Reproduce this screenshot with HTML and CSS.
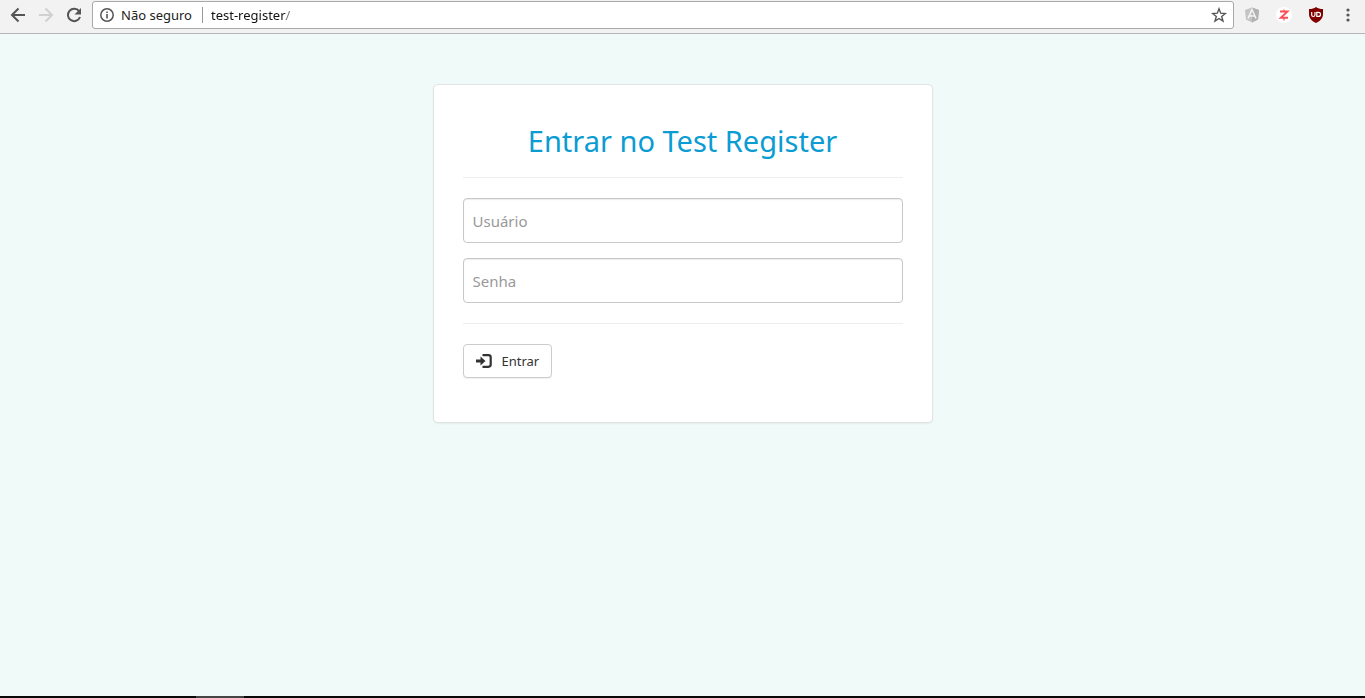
FILE: index.html
```html
<!DOCTYPE html>
<html lang="pt-BR">
<head>
<meta charset="utf-8">
<meta name="viewport" content="width=device-width, initial-scale=1">
<title>Test Register</title>
<link rel="stylesheet" href="styles.css">
</head>
<body>
<header class="toolbar">
  <nav class="nav-buttons">
    <button class="tool" type="button" aria-label="Voltar"><svg width="16" height="16" viewBox="0 0 16 16" fill="none" stroke="#555" stroke-width="2"><path d="M15 8H3M8.500 1.500L2 8l6.500 6.500"/></svg></button>
    <button class="tool" type="button" aria-label="Avançar" disabled><svg width="16" height="16" viewBox="0 0 16 16" fill="none" stroke="#d0d0d0" stroke-width="2"><path d="M1 8h12M7.500 1.500L14 8l-6.500 6.500"/></svg></button>
    <button class="tool" type="button" aria-label="Recarregar"><svg width="16" height="16" viewBox="0 0 16 16"><path d="M13.200 4.300A6.200 6.200 0 1 0 14 10" fill="none" stroke="#555" stroke-width="2"/><path d="M15 1v6.500H8.500z" fill="#555"/></svg></button>
  </nav>
  <div class="address">
    <svg class="info" width="14" height="14" viewBox="0 0 14 14"><circle cx="7" cy="7" r="6.200" fill="none" stroke="#555" stroke-width="1.500"/><path d="M6.200 6h1.600v4.500H6.200zM6.200 3.400h1.600V5H6.200z" fill="#555"/></svg>
    <span class="security">Não seguro</span>
    <input class="url" type="text" value="test-register/" aria-label="Endereço">
    <button class="tool star" type="button" aria-label="Favoritos"><svg width="16" height="16" viewBox="0 0 16 16" fill="none" stroke="#555" stroke-width="1.400"><path d="M8 1.800l1.700 4.400 4.700.3-3.700 3 1.300 4.600L8 11.500l-4 2.600 1.300-4.600-3.700-3 4.700-.3z"/></svg></button>
  </div>
  <div class="extensions">
    <button class="tool" type="button" aria-label="Angular"><svg width="16" height="16" viewBox="0 0 16 16"><path d="M8 .5l7 2.500-1 9.500-6 3-6-3L1 3z" fill="#c4c4c4"/><path d="M8 .5l7 2.500-1 9.500-6 3z" fill="#b2b2b2"/><path d="M4 11.500L8 2.500l4 9M5.500 9h5" fill="none" stroke="#f5f5f5" stroke-width="1.500"/></svg></button>
    <button class="tool" type="button" aria-label="Extensão Z"><svg width="16" height="16" viewBox="0 0 16 16"><circle cx="8" cy="8" r="8" fill="#fff"/><path d="M4 4.500h7.500L4.800 10.800H12" fill="none" stroke="#fa4f55" stroke-width="1.900"/><path d="M8 2.500v2M8 11v2.500" stroke="#fa4f55" stroke-width="1.200"/></svg></button>
    <button class="tool" type="button" aria-label="uBlock Origin"><svg width="16" height="16" viewBox="0 0 16 16"><path d="M8 0c2 1.400 4 2 7 2v5c0 4.500-3 7-7 9-4-2-7-4.500-7-9V2c3 0 5-.6 7-2z" fill="#800000"/><path d="M3.700 5v3q0 1.500 1.500 1.500T7 8V5" fill="none" stroke="#fff" stroke-width="1.200"/><path d="M8.800 5.400h1.700q2 0 2 2t-2 2H8.800z" fill="none" stroke="#fff" stroke-width="1.200"/></svg></button>
    <button class="tool" type="button" aria-label="Menu"><svg width="16" height="16" viewBox="0 0 16 16" fill="#555"><circle cx="8" cy="3" r="1.600"/><circle cx="8" cy="8" r="1.600"/><circle cx="8" cy="13" r="1.600"/></svg></button>
  </div>
</header>
<main class="page">
  <form class="card">
    <h1 class="title">Entrar no Test Register</h1>
    <hr class="rule">
    <div class="fields">
      <input class="field" type="text" placeholder="Usuário" aria-label="Usuário">
      <input class="field" type="password" placeholder="Senha" aria-label="Senha">
    </div>
    <hr class="rule">
    <button class="submit" type="button">
      <svg width="16" height="14" viewBox="0 0 16 14"><path d="M0 5.500h4.500V2.500L9.500 7l-5 4.500v-3H0z" fill="#333"/><path d="M6.500 1.200h6Q14.700 1.200 14.700 3.400v7.200q0 2.200-2.200 2.200h-6" fill="none" stroke="#333" stroke-width="2.200"/></svg>
      <span>Entrar</span>
    </button>
  </form>
</main>
<div class="desktop-edge"></div>
</body>
</html>
```
FILE: styles.css
```css
* { box-sizing: border-box; }

body {
  margin: 0;
  min-height: 100vh;
  display: flex;
  flex-direction: column;
  background: #effaf9;
  color: #333;
  font-family: Tahoma, "Noto Sans", sans-serif;
  font-size: 13px;
}

.toolbar {
  display: flex;
  align-items: center;
  height: 34px;
  padding: 0 9px 4px 10px;
  gap: 10px;
  background: #f2f2f2;
  border-bottom: 1px solid #b5b3b6;
}

.nav-buttons { display: flex; gap: 12px; }

.extensions { display: flex; gap: 16px; }

.tool {
  display: flex;
  padding: 0;
  border: 0;
  background: none;
}

.address {
  flex: 1;
  display: flex;
  align-items: center;
  height: 28px;
  padding: 0 6px 0 7px;
  border: 1px solid #a9a9a9;
  border-radius: 3px;
  background: #fff;
}

.info { margin-right: 7px; }

.security {
  padding-right: 10px;
  border-right: 1px solid #999;
  line-height: 16px;
  color: #222;
}

.url {
  flex: 1;
  padding: 0 0 0 8px;
  border: 0;
  font: inherit;
  line-height: 20px;
  color: transparent;
  background: linear-gradient(to right, #111 83px, #777 83px);
  -webkit-background-clip: text;
  background-clip: text;
}

.page {
  flex: 1;
  padding: 50px 16px;
}

.card {
  max-width: 500px;
  margin: 0 auto;
  padding: 34px 29px 44px;
  background: #fff;
  border: 1px solid #e2e4e4;
  border-radius: 5px;
  box-shadow: 0 1px 2px rgba(0, 0, 0, 0.06);
}

.title {
  margin: 0;
  color: #0a9cd2;
  font-size: 29px;
  font-weight: 400;
  line-height: 44px;
  text-align: center;
}

.rule {
  margin: 20px 0;
  border: 0;
  border-top: 1px solid #eee;
}

.title + .rule { margin-top: 14px; }

.fields { display: grid; gap: 15px; }

.field {
  width: 100%;
  height: 45px;
  padding: 8px 9px;
  border: 1px solid #c8c8c8;
  border-radius: 4px;
  background: #fff;
  box-shadow: inset 0 1px 1px rgba(0, 0, 0, 0.08);
  font: inherit;
  font-size: 15px;
}

.field::placeholder { color: #999; opacity: 1; }

.submit {
  display: flex;
  align-items: center;
  gap: 10px;
  height: 34px;
  padding: 0 12px;
  border: 1px solid #ccc;
  border-radius: 4px;
  background: #fff;
  box-shadow: 0 1px 1px rgba(0, 0, 0, 0.06);
  color: #333;
  font: inherit;
}

.desktop-edge {
  height: 2px;
  background: linear-gradient(to right, #080808 196px, #444 196px, #444 244px, #080808 244px);
}
```
